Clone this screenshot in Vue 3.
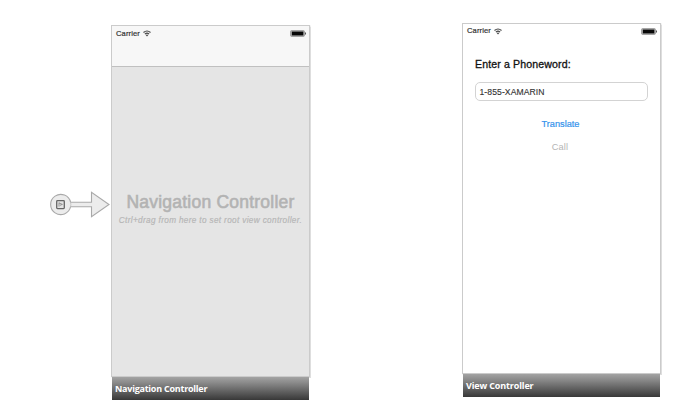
<script setup>
const phoneword = '1-855-XAMARIN'
</script>

<template>
  <main class="storyboard">
    <svg class="entry" width="60" height="28" viewBox="0 0 60 28">
      <path
        d="M20.6 12.3 A10.1 10.1 0 1 0 20.6 16.7 L41.5 16.7 V26.7 L59 14.5 L41.5 2.3 V12.3 Z"
        fill="#ececec" stroke="#a9a9a9" stroke-width="1.1"
      />
      <path d="M20.6 12.3 A10.1 10.1 0 0 1 20.6 16.7" fill="none" stroke="#bbb" stroke-width=".8" />
      <rect x="6.7" y="10.6" width="7.6" height="8" rx=".8" fill="#e4e4e4" stroke="#666" stroke-width="1.3" />
      <path d="M9 12.5 V16.6 M9 13 L12.4 14.4 L10 15.3" fill="none" stroke="#888" stroke-width=".9" />
    </svg>

    <section class="scene nav-scene">
      <div class="screen">
        <header class="navbar">
          <div class="status">
            <span class="carrier">Carrier</span>
            <svg class="wifi" width="8" height="7" viewBox="0 0 8 7">
              <path d="M.5 2.5 Q4 -.5 7.5 2.5 M1.9 4.1 Q4 2.3 6.1 4.1" fill="none" stroke="#444" stroke-width="1.2" />
              <path d="M2.7 4.9 Q4 3.9 5.3 4.9 L4 6.4 Z" fill="#444" />
            </svg>
            <svg class="battery" width="17" height="7" viewBox="0 0 17 7">
              <rect x=".5" y=".5" width="14" height="6" rx="1.3" fill="#aaa" stroke="#999" stroke-width=".8" />
              <rect x="1.9" y="1.6" width="11.4" height="3.8" fill="#080808" />
              <path d="M15 1.9 Q17.2 3.5 15 5.1 Z" fill="#555" />
            </svg>
          </div>
        </header>
        <div class="placeholder">
          <h1>Navigation Controller</h1>
          <p>Ctrl+drag from here to set root view controller.</p>
        </div>
      </div>
      <footer><span class="nav-label">Navigation Controller</span></footer>
    </section>

    <section class="scene view-scene">
      <div class="screen">
        <div class="status">
          <span class="carrier">Carrier</span>
          <svg class="wifi" width="8" height="7" viewBox="0 0 8 7">
            <path d="M.5 2.5 Q4 -.5 7.5 2.5 M1.9 4.1 Q4 2.3 6.1 4.1" fill="none" stroke="#444" stroke-width="1.2" />
            <path d="M2.7 4.9 Q4 3.9 5.3 4.9 L4 6.4 Z" fill="#444" />
          </svg>
          <svg class="battery" width="17" height="7" viewBox="0 0 17 7">
            <rect x=".5" y=".5" width="14" height="6" rx="1.3" fill="#aaa" stroke="#999" stroke-width=".8" />
            <rect x="1.9" y="1.6" width="11.4" height="3.8" fill="#080808" />
            <path d="M15 1.9 Q17.2 3.5 15 5.1 Z" fill="#555" />
          </svg>
        </div>
        <div class="form">
          <div class="title">Enter a Phoneword:</div>
          <div class="field">{{ phoneword }}</div>
          <div class="translate">Translate</div>
          <div class="call">Call</div>
        </div>
      </div>
      <footer><span class="view-label">View Controller</span></footer>
    </section>
  </main>
</template>

<style>
body { margin: 0; background: #fff; }
</style>

<style scoped>
.storyboard {
  width: 673px;
  height: 417px;
  display: flex;
  align-items: flex-start;
  overflow: hidden;
  font-family: "Liberation Sans", Arial, sans-serif;
  white-space: nowrap;
}
.entry { flex: none; margin: 190px 0 0 50px; }
.scene { flex: none; width: 199px; }
.nav-scene { margin: 25px 0 0 1px; }
.view-scene { margin: 23px 0 0 152px; }
.screen {
  box-sizing: border-box;
  height: 352px;
  border: 1px solid #cbcbcb;
  box-shadow: 0 0 1px 0.5px #dedede;
  display: flex;
  flex-direction: column;
}
.nav-scene .screen { background: #e5e5e5; }
.view-scene .screen { background: #fff; height: 351px; }
.navbar {
  box-sizing: border-box;
  height: 41px;
  background: #f7f7f7;
  border-bottom: 1px solid #c0c0c0;
}
.status {
  height: 15px;
  padding: 0 2px 0 4px;
  display: flex;
  align-items: center;
}
.view-scene .status { height: 14px; }
.carrier {
  font-size: 7.6px;
  line-height: 14px;
  letter-spacing: 0.1px;
  color: #333;
  -webkit-text-stroke: 0.2px #333;
}
.wifi { margin-left: 3px; }
.battery { margin-left: auto; }
.placeholder {
  display: flex;
  flex-direction: column;
  align-items: center;
  padding-top: 125px;
}
h1 {
  margin: 0;
  font-size: 17.5px;
  line-height: 21px;
  font-weight: 400;
  letter-spacing: 0.22px;
  color: #b3b3b3;
  -webkit-text-stroke: 0.6px #b3b3b3;
}
p {
  margin: 1px 0 0;
  font-size: 8.2px;
  line-height: 13px;
  font-style: italic;
  letter-spacing: 0.35px;
  color: #b7b7b7;
  -webkit-text-stroke: 0.2px #b7b7b7;
}
footer {
  width: 197px;
  height: 23px;
  margin-left: 1px;
  background: linear-gradient(#a3a3a3, #8a8a8a 25%, #383838);
  color: #fff;
  font-family: "Open Sans", sans-serif;
  font-size: 9px;
  font-weight: 700;
  line-height: 23px;
}
footer span { padding-left: 3px; }
.nav-label { letter-spacing: -0.24px; }
.view-label { letter-spacing: -0.14px; }
.form { display: flex; flex-direction: column; padding: 19px 12px 0; }
.title {
  font-size: 10.6px;
  line-height: 15px;
  letter-spacing: 0.12px;
  color: #111;
  -webkit-text-stroke: 0.3px #111;
}
.field {
  box-sizing: border-box;
  width: 173px;
  height: 19px;
  margin-top: 10px;
  padding-left: 3.5px;
  border: 1px solid #d3d3d3;
  border-radius: 5px;
  font-size: 8.6px;
  line-height: 19px;
  letter-spacing: 0.08px;
  color: #333;
  -webkit-text-stroke: 0.12px #333;
}
.translate, .call { width: 171px; text-align: center; font-size: 9.2px; line-height: 13px; }
.translate { margin-top: 17px; color: #3593ec; -webkit-text-stroke: 0.2px #3593ec; }
.call { margin-top: 10px; width: 170px; letter-spacing: 0.2px; color: #b4b4b4; }
</style>
